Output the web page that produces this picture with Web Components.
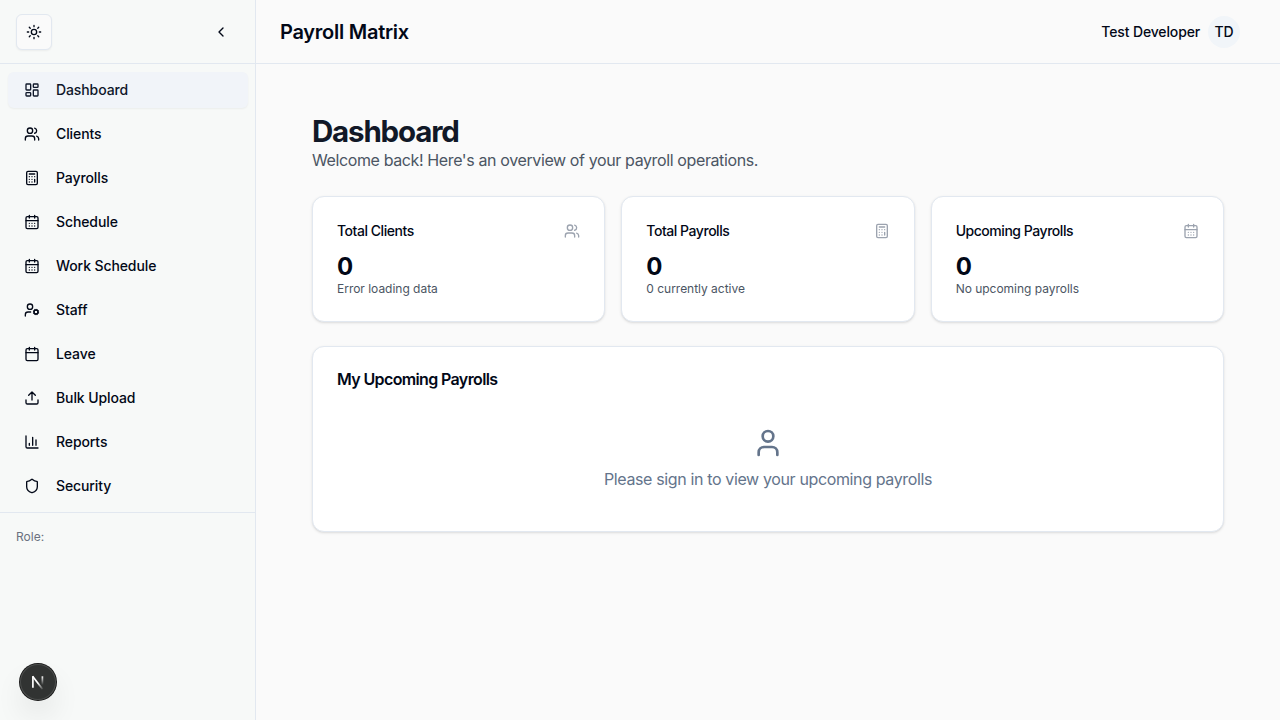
<!DOCTYPE html>
<html lang="en">
<head>
<meta charset="utf-8">
<title>Payroll Matrix</title>
<style>
html,body{margin:0;height:100%}
body{font-family:Inter,"Liberation Sans",sans-serif;font-size:16px;line-height:24px;color:#020817;background:#fafafa;overflow:hidden;
--border:#e2e8f0;--accent:#f1f5f9}
</style>
</head>
<body>
<app-shell>
  <side-bar slot="side">
    <nav-item icon="dashboard" active>Dashboard</nav-item>
    <nav-item icon="users">Clients</nav-item>
    <nav-item icon="calculator">Payrolls</nav-item>
    <nav-item icon="days">Schedule</nav-item>
    <nav-item icon="days">Work Schedule</nav-item>
    <nav-item icon="usercog">Staff</nav-item>
    <nav-item icon="calendar">Leave</nav-item>
    <nav-item icon="upload">Bulk Upload</nav-item>
    <nav-item icon="chart">Reports</nav-item>
    <nav-item icon="shield">Security</nav-item>
  </side-bar>
  <top-bar slot="top" initials="TD">Payroll Matrix<span slot="user">Test Developer</span></top-bar>
  <page-head>Dashboard<span slot="sub">Welcome back! Here's an overview of your payroll operations.</span></page-head>
  <card-row>
    <stat-card icon="users" value="0" note="Error loading data">Total Clients</stat-card>
    <stat-card icon="calculator" value="0" note="0 currently active">Total Payrolls</stat-card>
    <stat-card icon="days" value="0" note="No upcoming payrolls">Upcoming Payrolls</stat-card>
  </card-row>
  <upcoming-card>My Upcoming Payrolls<span slot="message">Please sign in to view your upcoming payrolls</span></upcoming-card>
</app-shell>
<dev-badge></dev-badge>
<script>
const ICONS = {
  dashboard:'<rect width="7" height="9" x="3" y="3" rx="1"/><rect width="7" height="5" x="14" y="3" rx="1"/><rect width="7" height="9" x="14" y="12" rx="1"/><rect width="7" height="5" x="3" y="16" rx="1"/>',
  users:'<path d="M16 21v-2a4 4 0 0 0-4-4H6a4 4 0 0 0-4 4v2"/><circle cx="9" cy="7" r="4"/><path d="M22 21v-2a4 4 0 0 0-3-3.87"/><path d="M16 3.13a4 4 0 0 1 0 7.75"/>',
  calculator:'<rect width="16" height="20" x="4" y="2" rx="2"/><path d="M8 6h8M16 14v4M16 10h.01M12 10h.01M8 10h.01M12 14h.01M8 14h.01M12 18h.01M8 18h.01"/>',
  calendar:'<path d="M8 2v4M16 2v4"/><rect width="18" height="18" x="3" y="4" rx="2"/><path d="M3 10h18"/>',
  days:'<path d="M8 2v4M16 2v4"/><rect width="18" height="18" x="3" y="4" rx="2"/><path d="M3 10h18M8 14h.01M12 14h.01M16 14h.01M8 18h.01M12 18h.01M16 18h.01"/>',
  usercog:'<circle cx="18" cy="15" r="3"/><circle cx="9" cy="7" r="4"/><path d="M10 15H6a4 4 0 0 0-4 4v2"/><path d="m21.7 16.4-.9-.3M15.2 13.9l-.9-.3M16.6 18.7l.3-.9M19.1 12.2l.3-.9M19.6 18.7l-.4-1M16.8 12.3l-.4-1M14.3 16.6l1-.4M20.7 13.8l1-.4"/>',
  upload:'<path d="M21 15v4a2 2 0 0 1-2 2H5a2 2 0 0 1-2-2v-4"/><path d="m17 8-5-5-5 5M12 3v12"/>',
  chart:'<path d="M3 3v16a2 2 0 0 0 2 2h16M18 17V9M13 17V5M8 17v-3"/>',
  shield:'<path d="M20 13c0 5-3.5 7.5-7.66 8.95a1 1 0 0 1-.67-.01C7.5 20.5 4 18 4 13V6a1 1 0 0 1 1-1c2 0 4.5-1.2 6.24-2.72a1.17 1.17 0 0 1 1.52 0C14.51 3.81 17 5 19 5a1 1 0 0 1 1 1z"/>',
  user:'<path d="M19 21v-2a4 4 0 0 0-4-4H9a4 4 0 0 0-4 4v2"/><circle cx="12" cy="7" r="4"/>',
  sun:'<circle cx="12" cy="12" r="4"/><path d="M12 2v2M12 20v2M4.93 4.93l1.41 1.41M17.66 17.66l1.41 1.41M2 12h2M20 12h2M6.34 17.66l-1.41 1.41M19.07 4.93l-1.41 1.41"/>',
  left:'<path d="m15 18-6-6 6-6"/>'
};
function define(name, render){
  customElements.define(name, class extends HTMLElement{
    constructor(){ super(); this.attachShadow({mode:'open'}); }
    connectedCallback(){ this.shadowRoot.innerHTML = render(this); }
  });
}
define('line-icon', el => `<style>:host{display:block;flex:none;width:16px;height:16px}svg{display:block;width:100%;height:100%}</style>
<svg viewBox="0 0 24 24" fill="none" stroke="currentColor" stroke-width="2" stroke-linecap="round" stroke-linejoin="round">${ICONS[el.getAttribute('name')]}</svg>`);

define('app-shell', () => `<style>
:host{display:grid;grid-template-columns:256px 1fr;height:100vh}
section{display:flex;flex-direction:column;min-width:0}
main{display:flex;flex-direction:column;gap:24px;padding:48px 56px}
</style><slot name="side"></slot><section><slot name="top"></slot><main><slot></slot></main></section>`);

define('side-bar', () => `<style>
:host{display:flex;flex-direction:column;box-sizing:border-box;background:#f7f9f8;border-right:1px solid var(--border)}
header{display:flex;align-items:center;justify-content:space-between;box-sizing:border-box;height:64px;padding:0 16px;border-bottom:1px solid var(--border)}
button{display:flex;align-items:center;justify-content:center;box-sizing:border-box;width:36px;height:36px;margin:0;padding:0;border:0;background:none;color:inherit;border-radius:6px}
.theme{border:1px solid var(--border);background:#fafafa;box-shadow:0 1px 2px rgba(0,0,0,.05)}
nav{display:flex;flex-direction:column;gap:8px;padding:8px 7px 8px 8px}
footer{border-top:1px solid var(--border);padding:16px;font-size:12px;line-height:16px;color:#6b7280}
</style><header><button class="theme" aria-label="Theme"><line-icon name="sun"></line-icon></button><button aria-label="Collapse"><line-icon name="left"></line-icon></button></header>
<nav><slot></slot></nav><footer>Role:</footer>`);

define('nav-item', el => `<style>
:host{display:flex;align-items:center;gap:16px;height:36px;padding:0 16px;border-radius:6px;font-size:14px;line-height:20px;font-weight:500;letter-spacing:-.1px}
:host([active]){background:#f1f4f9;color:#0f172a;box-shadow:0 1px 2px rgba(0,0,0,.05)}
</style><line-icon name="${el.getAttribute('icon')}"></line-icon><slot></slot>`);

define('top-bar', el => `<style>
:host{display:flex;align-items:center;justify-content:space-between;box-sizing:border-box;height:64px;padding:0 40px 0 24px;border-bottom:1px solid var(--border)}
h2{margin:0;font-size:20px;line-height:28px;font-weight:600;letter-spacing:-.26px}
div{display:flex;align-items:center;gap:8px;font-size:14px;line-height:20px;font-weight:500;letter-spacing:-.14px}
b{display:flex;align-items:center;justify-content:center;width:32px;height:32px;border-radius:50%;background:var(--accent);font-weight:500}
</style><h2><slot></slot></h2><div><slot name="user"></slot><b>${el.getAttribute('initials')}</b></div>`);

define('page-head', () => `<style>
:host{display:block}
h1{margin:0;padding-top:2px;font-size:29.5px;line-height:34px;font-weight:700;letter-spacing:-1.18px;color:#111827}
p{margin:0;color:#4b5563;letter-spacing:-.383px}
</style><h1><slot></slot></h1><p><slot name="sub"></slot></p>`);

define('card-row', () => `<style>:host{display:grid;grid-template-columns:repeat(3,1fr);gap:16px}</style><slot></slot>`);

const CARD = `:host{display:block;box-sizing:border-box;border:1px solid var(--border);border-radius:12px;background:#fff;padding:24px;box-shadow:0 1px 3px rgba(0,0,0,.1),0 1px 2px -1px rgba(0,0,0,.1)}`;
define('stat-card', el => `<style>${CARD}
header{display:flex;align-items:center;justify-content:space-between;margin-bottom:8px;font-size:14px;line-height:20px;font-weight:500;letter-spacing:-.46px}
line-icon{color:#9ca3af}
div{padding-top:4px;font-size:24px;line-height:28px;font-weight:700}
p{margin:0;font-size:12px;line-height:16px;color:#4b5563;letter-spacing:-.02px}
</style><header><slot></slot><line-icon name="${el.getAttribute('icon')}"></line-icon></header><div>${el.getAttribute('value')}</div><p>${el.getAttribute('note')}</p>`);

define('upcoming-card', () => `<style>${CARD}
h3{margin:0 0 24px;font-size:16px;line-height:16px;font-weight:600;letter-spacing:-.63px}
div{display:flex;flex-direction:column;align-items:center;gap:8px;padding:16px 0;color:#64748b;letter-spacing:-.365px}
line-icon{width:32px;height:32px}
</style><h3><slot></slot></h3><div><line-icon name="user"></line-icon><slot name="message"></slot></div>`);

define('dev-badge', () => `<style>
:host{position:fixed;left:20px;bottom:20px;display:flex;align-items:center;justify-content:center;width:36px;height:36px;border-radius:50%;background:#313332;
box-shadow:0 0 0 1px #171717,inset 0 0 0 1px #4b4d4c,0 16px 32px -8px rgba(0,0,0,.24)}
svg{display:block}
</style><svg width="36" height="36" viewBox="0 0 36 36" fill="none" stroke-width="1.7"><defs><linearGradient id="d" gradientUnits="userSpaceOnUse" x1="18.5" y1="18.5" x2="23.5" y2="25.5"><stop stop-color="#fff"/><stop offset="1" stop-color="#fff" stop-opacity="0"/></linearGradient><linearGradient id="v" gradientUnits="userSpaceOnUse" x1="0" y1="12" x2="0" y2="21"><stop stop-color="#fff"/><stop offset="1" stop-color="#fff" stop-opacity="0"/></linearGradient></defs>
<path stroke="#fff" d="M12.9 23.8V12.3"/><path stroke="url(#d)" d="M12.6 12.3l10 13"/><path stroke="url(#v)" d="M22.4 12.3v10"/></svg>`);
</script>
</body>
</html>
